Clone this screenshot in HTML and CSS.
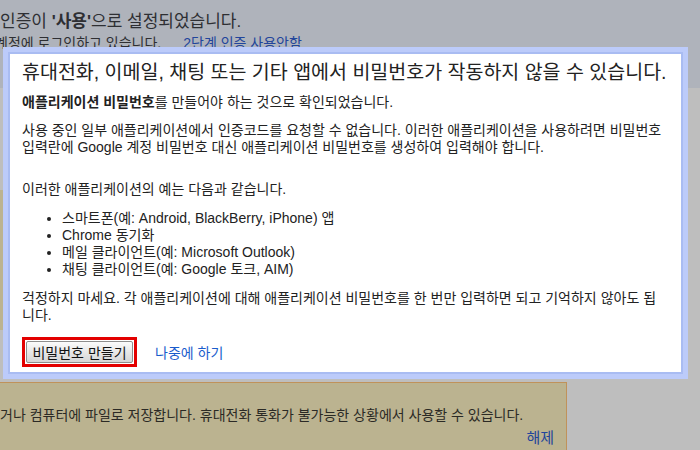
FILE: index.html
```html
<!DOCTYPE html>
<html lang="ko">
<head>
  <meta charset="UTF-8">
  <meta name="viewport" content="width=device-width, initial-scale=1.0">
  <title>2단계 인증 - 애플리케이션 비밀번호</title>
  <link rel="stylesheet" href="styles.css">
</head>
<body>

  <!-- 배경 페이지 (오버레이로 어둡게 보임) -->
  <div class="page">
    <div class="page-header">
      <div class="status">인증이 <b>'사용'</b>으로 설정되었습니다.</div>
      <div class="status-sub">
        <span class="signed-in">계정에 로그인하고 있습니다.</span>
        <a href="#" class="link-dark">2단계 인증 사용안함</a>
      </div>
    </div>

    <div class="page-body">
      <div class="side-note"></div>
      <div class="notice">
        <p>거나 컴퓨터에 파일로 저장합니다. 휴대전화 통화가 불가능한 상황에서 사용할 수 있습니다.</p>
        <div class="notice-actions"><a href="#" class="link-dark">해제</a></div>
      </div>
    </div>
  </div>

  <!-- 대화상자 -->
  <div class="dialog">
    <div class="dialog-inner">
      <h2 class="dialog-title">휴대전화, 이메일, 채팅 또는 기타 앱에서 비밀번호가 작동하지 않을 수 있습니다.</h2>

      <p class="lead"><b>애플리케이션 비밀번호</b>를 만들어야 하는 것으로 확인되었습니다.</p>

      <p>사용 중인 일부 애플리케이션에서 인증코드를 요청할 수 없습니다. 이러한 애플리케이션을 사용하려면 비밀번호<br>입력란에 Google 계정 비밀번호 대신 애플리케이션 비밀번호를 생성하여 입력해야 합니다.</p>

      <p class="examples">이러한 애플리케이션의 예는 다음과 같습니다.</p>
      <ul class="app-list">
        <li>스마트폰(예: Android, BlackBerry, iPhone) 앱</li>
        <li>Chrome 동기화</li>
        <li>메일 클라이언트(예: Microsoft Outlook)</li>
        <li>채팅 클라이언트(예: Google 토크, AIM)</li>
      </ul>

      <p>걱정하지 마세요. 각 애플리케이션에 대해 애플리케이션 비밀번호를 한 번만 입력하면 되고 기억하지 않아도 됩<br>니다.</p>

      <div class="dialog-actions">
        <span class="highlight"><button type="button" class="btn">비밀번호 만들기</button></span>
        <a href="#" class="link">나중에 하기</a>
      </div>
    </div>
  </div>

</body>
</html>
```

FILE: styles.css
```css
body {
  margin: 0;
  padding: 0;
  width: 700px;
  height: 450px;
  overflow: hidden;
  position: relative;
  font-family: "Liberation Sans", "Noto Sans CJK KR", sans-serif;
  font-size: 14px;
  color: #222;
  background-color: #bebebe;
}

a {
  text-decoration: none;
}

/* 배경 페이지 */
.page-header {
  height: 88px;
  box-sizing: border-box;
  padding-top: 10px;
  background-color: #afb3bb;
  color: #2e2f33;
}

.status {
  font-size: 17px;
  line-height: 24px;
  white-space: nowrap;
}

.status-sub {
  display: flex;
  gap: 22px;
  margin-top: 1px;
  margin-left: -5px;
  line-height: 16px;
  white-space: nowrap;
}

.link-dark {
  color: #22459b;
}

.page-body {
  height: 362px;
  overflow: hidden;
}

.side-note {
  width: 7px;
  height: 140px;
  margin-top: 102px;
  background-color: #bcb390;
  border-right: 1px solid #a89c78;
}

.notice {
  width: 577px;
  margin-top: 52px;
  margin-left: -10px;
  box-sizing: border-box;
  padding: 24px 12px 0 10px;
  height: 80px;
  background-color: #bbb390;
  border-top: 1px solid #c0925a;
  border-right: 1px solid #c0925a;
  color: #2b2a25;
}

.notice p {
  margin: 0;
  line-height: 17px;
  white-space: nowrap;
}

.notice-actions {
  text-align: right;
  padding-top: 5px;
  font-size: 15px;
  line-height: 18px;
}

/* 대화상자 */
.dialog {
  position: absolute;
  top: 47px;
  left: 3px;
  width: 685px;
  box-sizing: border-box;
  border: 5px solid #bccbfa;
}

.dialog-inner {
  background-color: #fff;
  border: 2px solid #a9bcf2;
  padding: 6px 12px 5px;
}

.dialog-title {
  margin: 0;
  font-size: 19.5px;
  font-weight: normal;
  line-height: 24px;
  white-space: nowrap;
}

.dialog-inner p {
  margin: 11px 0 0;
  line-height: 17px;
  white-space: nowrap;
}

.dialog-inner p.lead {
  margin-top: 10px;
}

.dialog-inner p.examples {
  margin-top: 25px;
}

.app-list {
  margin: 12px 0 0;
  padding-left: 40px;
  line-height: 17px;
}

.app-list + p {
  margin-top: 12px;
}

.dialog-actions {
  display: flex;
  align-items: center;
  gap: 18px;
  margin-top: 13px;
}

.highlight {
  display: inline-block;
  border: 3px solid #e30000;
  padding: 1px;
}

.btn {
  display: block;
  width: 107px;
  height: 22px;
  padding: 0;
  font-family: "Liberation Sans", "Noto Sans CJK KR", sans-serif;
  font-size: 14px;
  color: #111;
  border: 1px solid #8e8e8e;
  border-radius: 2px;
  background: linear-gradient(#fbfbfb, #e4e4e4 60%, #d6d6d6);
  cursor: pointer;
}

.link {
  color: #1a5ccc;
}
```
